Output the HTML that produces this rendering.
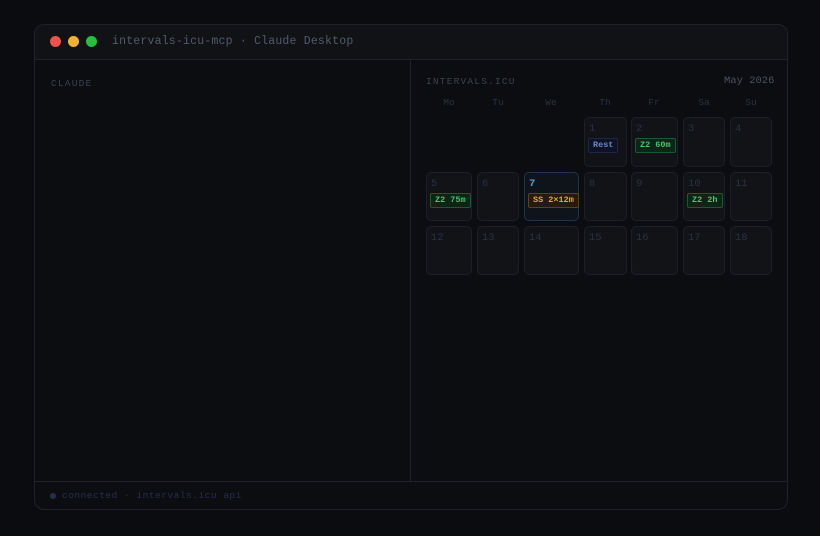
<!DOCTYPE html>
<html><head><style>
*{margin:0;padding:0;box-sizing:border-box}
body{width:820px;height:536px;background:#0b0c0f;font-family:"Liberation Mono",monospace;position:relative;overflow:hidden}
.win{position:absolute;left:34px;top:24px;width:754px;height:486px;background:#0c0d10;border:1px solid #1f2229;border-radius:10px;overflow:hidden}
.tb{position:absolute;left:0;top:0;right:0;height:35px;background:#111215;border-bottom:1px solid #1f2229}
.dot{position:absolute;top:11px;width:11px;height:11px;border-radius:50%}
.t{position:absolute;color:#4f5666;white-space:nowrap}
.div{position:absolute;left:375px;top:35px;width:1px;height:421px;background:#1f2229}
.ft{position:absolute;left:0;right:0;top:456px;height:1px;background:#1f2229}
.c{position:absolute;background:#111317;border:1px solid #1c1f26;border-radius:5px}
.n{position:absolute;left:4px;top:5px;font-size:10.5px;color:#2b3142}
.b{position:absolute;left:3px;top:20px;height:15px;font-size:8.5px;line-height:13px;padding:0 4px;border-radius:2px;white-space:nowrap;font-weight:bold}
.g{background:#0e2417;border:1px solid #1b5a30;color:#4cc170}
.d{position:absolute;top:97px;font-size:9.5px;color:#2b3142;width:40px;text-align:center}
</style></head><body>
<div class="win">
<div class="tb">
<div class="dot" style="left:15px;background:#f0524b"></div>
<div class="dot" style="left:33px;background:#f2b12f"></div>
<div class="dot" style="left:51px;background:#26c03e"></div>
<div class="t" style="left:77px;top:10px;font-size:11.5px;letter-spacing:0.2px;color:#525a6a">intervals-icu-mcp · Claude Desktop</div>
</div>
<div class="t" style="left:16px;top:53px;font-size:9.5px;letter-spacing:1.2px;color:#3a4150">CLAUDE</div>
<div class="div"></div>
<div class="ft"></div>
<div style="position:absolute;left:15px;top:468px;width:6px;height:6px;border-radius:50%;background:#253050"></div>
<div class="t" style="left:27px;top:465px;font-size:9.5px;letter-spacing:0.5px;color:#253050">connected · intervals.icu api</div>
</div>
<div class="t" style="left:426px;top:76px;font-size:9.5px;letter-spacing:1.2px;color:#3a4150">INTERVALS.ICU</div>
<div class="t" style="left:724px;top:75px;font-size:10.5px;color:#4a5264">May 2026</div>
<div class="d" style="left:429px">Mo</div><div class="d" style="left:478px">Tu</div><div class="d" style="left:531px">We</div><div class="d" style="left:585px">Th</div><div class="d" style="left:634px">Fr</div><div class="d" style="left:684px">Sa</div><div class="d" style="left:731px">Su</div>
<div class="c" style="left:584px;top:117px;width:43px;height:50px"><div class="n">1</div><div class="b" style="background:#0d1224;border:1px solid #1c2646;color:#6e86c8">Rest</div></div>
<div class="c" style="left:631px;top:117px;width:47px;height:50px"><div class="n">2</div><div class="b g">Z2 60m</div></div>
<div class="c" style="left:683px;top:117px;width:42px;height:50px"><div class="n">3</div></div>
<div class="c" style="left:730px;top:117px;width:42px;height:50px"><div class="n">4</div></div>
<div class="c" style="left:426px;top:172px;width:46px;height:49px"><div class="n">5</div><div class="b g">Z2 75m</div></div>
<div class="c" style="left:477px;top:172px;width:42px;height:49px"><div class="n">6</div></div>
<div class="c" style="left:524px;top:172px;width:55px;height:49px;border-color:#1d3550;background:#0f141b"><div class="n" style="color:#4fa3e0;font-weight:bold">7</div><div class="b" style="background:#241c08;border:1px solid #5a4412;color:#e0aa2a">SS 2×12m</div></div>
<div class="c" style="left:584px;top:172px;width:43px;height:49px"><div class="n">8</div></div>
<div class="c" style="left:631px;top:172px;width:47px;height:49px"><div class="n">9</div></div>
<div class="c" style="left:683px;top:172px;width:42px;height:49px"><div class="n">10</div><div class="b g">Z2 2h</div></div>
<div class="c" style="left:730px;top:172px;width:42px;height:49px"><div class="n">11</div></div>
<div class="c" style="left:426px;top:226px;width:46px;height:49px"><div class="n">12</div></div>
<div class="c" style="left:477px;top:226px;width:42px;height:49px"><div class="n">13</div></div>
<div class="c" style="left:524px;top:226px;width:55px;height:49px"><div class="n">14</div></div>
<div class="c" style="left:584px;top:226px;width:43px;height:49px"><div class="n">15</div></div>
<div class="c" style="left:631px;top:226px;width:47px;height:49px"><div class="n">16</div></div>
<div class="c" style="left:683px;top:226px;width:42px;height:49px"><div class="n">17</div></div>
<div class="c" style="left:730px;top:226px;width:42px;height:49px"><div class="n">18</div></div>
</body></html>
